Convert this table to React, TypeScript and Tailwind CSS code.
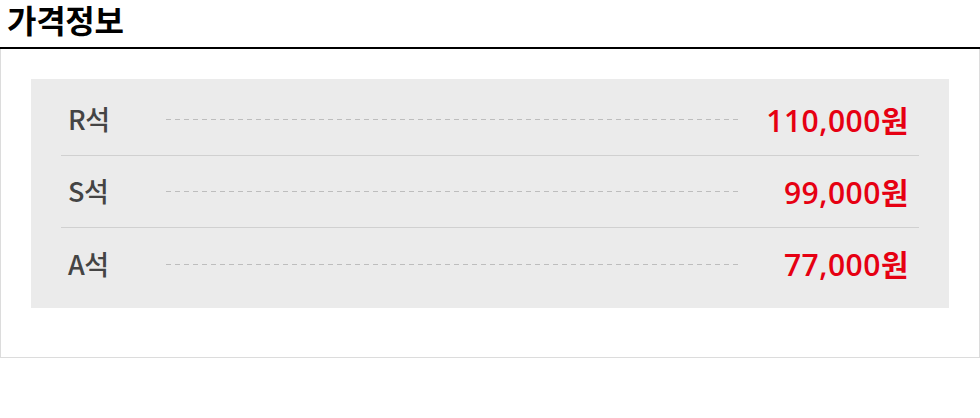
const prices = [
  { seat: 'R석', price: '110,000' },
  { seat: 'S석', price: '99,000' },
  { seat: 'A석', price: '77,000' },
]

export default function App() {
  return (
    <div className="h-[418px] w-[980px] bg-white font-['Noto_Sans_CJK_KR','Noto_Sans',sans-serif]">
      <h2 className="h-[47px] pl-[7px] text-[32px] font-bold leading-[38px] tracking-[-0.3px] text-black">
        가격정보
      </h2>
      <div className="h-[2px] w-full bg-black" />
      <div className="h-[309px] border border-t-0 border-[#dcdcdc] px-[30px] pt-[30px]">
        <ul className="bg-[#ebebeb] px-[30px] pb-[8px] pt-[5px]">
          {prices.map((p, i) => (
            <li
              key={p.seat}
              className={
                'flex h-[72px] items-center pl-[7px] pr-[10px] ' +
                (i < prices.length - 1 ? 'border-b border-[#d0d0d0]' : '')
              }
            >
              <span className="w-[98px] text-[27px] font-medium tracking-[-0.5px] text-[#444]">
                {p.seat}
              </span>
              <div className="h-px w-[574px] bg-[linear-gradient(to_right,#bdbdbd_55%,transparent_55%)] bg-[length:9px_1px]" />
              <span className="ml-auto font-['Open_Sans','Noto_Sans_CJK_KR',sans-serif] text-[30px] font-semibold tracking-[0.5px] text-[#e60012]">
                {p.price}
                <span className="font-['Noto_Sans_CJK_KR',sans-serif] font-bold">원</span>
              </span>
            </li>
          ))}
        </ul>
      </div>
    </div>
  )
}
